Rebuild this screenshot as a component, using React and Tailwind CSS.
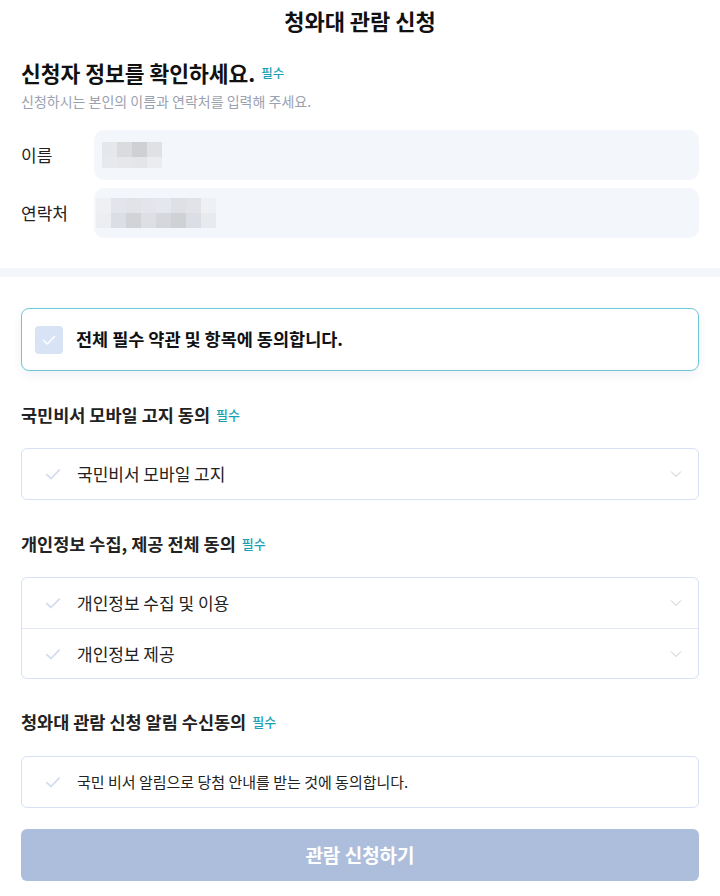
import { useState } from "react";

const FONT = { fontFamily: '"Noto Sans CJK KR", "Noto Sans", sans-serif' };

// pixelated (masked) personal values
const nameBlocks = [
  ["#e6e7ea", "#dadbdd", "#cfd0d4", "#e0e1e5"],
  ["#e8e9ec", "#e6e7eb", "#e4e5e9", "#ebecf0"],
];
const phoneBlocks = [
  ["#eef0f4", "#e4e5ec", "#e2e3e8", "#e4e5ea", "#e5e7ee", "#dfe0e6", "#e2e3e8", "#eff0f3"],
  ["#eceef2", "#dcdee6", "#d2d3d7", "#dedfe5", "#d6d7dc", "#d0d1d5", "#dcdee6", "#e9eaee"],
];

function Mosaic({ rows }) {
  return (
    <div className="flex flex-col">
      {rows.map((row, i) => (
        <div key={i} className="flex">
          {row.map((c, j) => (
            <div key={j} className="w-[15px] h-[15px]" style={{ background: c }} />
          ))}
        </div>
      ))}
    </div>
  );
}

function Check({ className }) {
  return (
    <svg viewBox="0 0 16 16" className={className} fill="none">
      <path d="M2.5 8.5 L6.3 12 L13.5 4.5" stroke="currentColor" strokeWidth="1.6" strokeLinecap="round" strokeLinejoin="round" />
    </svg>
  );
}

function Chevron() {
  return (
    <svg viewBox="0 0 12 8" className="w-[12px] h-[8px] text-[#c4c8d0]" fill="none">
      <path d="M1 1.5 L6 6.5 L11 1.5" stroke="currentColor" strokeWidth="1" />
    </svg>
  );
}

function Required({ size = "text-[13px]" }) {
  return <span className={`ml-[6px] font-medium text-[#1a9fb5] ${size}`}>필수</span>;
}

function SectionTitle({ children }) {
  return (
    <h3 className="flex items-center text-[17.5px] leading-[22px] font-semibold text-[#222]">
      {children}
      <Required />
    </h3>
  );
}

function TermRow({ label, chevron = true, small = false, divider = false }) {
  return (
    <div className={`flex items-center h-[50px] pl-[22px] pr-[16px] ${divider ? "border-t border-[#e1e8f4]" : ""}`}>
      <Check className="w-[18px] h-[18px] text-[#d3ddef]" />
      <span className={`ml-[15px] flex-1 leading-[22px] text-[#222] ${small ? "text-[15px]" : "text-[17px]"}`}>{label}</span>
      {chevron && <Chevron />}
    </div>
  );
}

function App() {
  const [agreed, setAgreed] = useState(false);

  return (
    <div className="bg-white min-h-screen w-[720px]" style={FONT}>
      <div className="h-[40px] flex items-center justify-center">
        <h1 className="text-[22px] leading-[28px] font-bold text-[#111]">청와대 관람 신청</h1>
      </div>

      <div className="px-[21px]">
        <h2 className="mt-[19px] flex items-center text-[21.5px] leading-[28px] font-bold text-[#111]">
          신청자 정보를 확인하세요.
          <Required size="text-[12.5px]" />
        </h2>
        <p className="mt-[5px] text-[14px] leading-[18px] text-[#9aa1b1]">
          신청하시는 본인의 이름과 연락처를 입력해 주세요.
        </p>

        <div className="mt-[20px] flex flex-col gap-[8px]">
          <div className="flex items-center">
            <label className="w-[73px] text-[17px] text-[#222]">이름</label>
            <div className="flex-1 h-[50px] rounded-[10px] bg-[#f3f6fb] flex items-center pl-[8px]">
              <div className="flex flex-col">
                <div className="flex">
                  {nameBlocks[0].map((c, j) => (
                    <div key={j} className="w-[15px] h-[15px]" style={{ background: c }} />
                  ))}
                </div>
                <div className="flex">
                  {nameBlocks[1].map((c, j) => (
                    <div key={j} className="w-[15px] h-[11px]" style={{ background: c }} />
                  ))}
                </div>
              </div>
            </div>
          </div>
          <div className="flex items-center">
            <label className="w-[73px] text-[17px] text-[#222]">연락처</label>
            <div className="flex-1 h-[50px] rounded-[10px] bg-[#f3f6fb] flex items-center pl-[2px]">
              <Mosaic rows={phoneBlocks} />
            </div>
          </div>
        </div>
      </div>

      <div className="mt-[30px] h-[9px] bg-[#f3f6fb]" />

      <div className="px-[21px] pb-[16px]">
        <button
          onClick={() => setAgreed(!agreed)}
          className="mt-[31px] w-full h-[63px] flex items-center pl-[13px] rounded-[8px] border border-[#6cc7d6] bg-white shadow-[0_4px_10px_rgba(120,140,180,0.12)]"
        >
          <span className={`w-[28px] h-[28px] rounded-[4px] flex items-center justify-center ${agreed ? "bg-[#3ab5c9]" : "bg-[#d8e3f5]"}`}>
            <Check className="w-[16px] h-[16px] text-white" />
          </span>
          <span className="ml-[13px] text-[17.5px] font-bold text-[#111]">전체 필수 약관 및 항목에 동의합니다.</span>
        </button>

        <div className="mt-[33px]">
          <SectionTitle>국민비서 모바일 고지 동의</SectionTitle>
        </div>
        <div className="mt-[22px] rounded-[6px] border border-[#d6e1f3]">
          <TermRow label="국민비서 모바일 고지" />
        </div>

        <div className="mt-[33px]">
          <SectionTitle>개인정보 수집, 제공 전체 동의</SectionTitle>
        </div>
        <div className="mt-[22px] rounded-[6px] border border-[#d6e1f3]">
          <TermRow label="개인정보 수집 및 이용" />
          <TermRow label="개인정보 제공" divider />
        </div>

        <div className="mt-[32px]">
          <SectionTitle>청와대 관람 신청 알림 수신동의</SectionTitle>
        </div>
        <div className="mt-[23px] rounded-[6px] border border-[#d6e1f3]">
          <TermRow label="국민 비서 알림으로 당첨 안내를 받는 것에 동의합니다." chevron={false} small />
        </div>

        <button className="mt-[21px] w-full h-[52px] rounded-[6px] bg-[#acbedb] text-white text-[19px] font-bold">
          관람 신청하기
        </button>
      </div>
    </div>
  );
}

export default App;
